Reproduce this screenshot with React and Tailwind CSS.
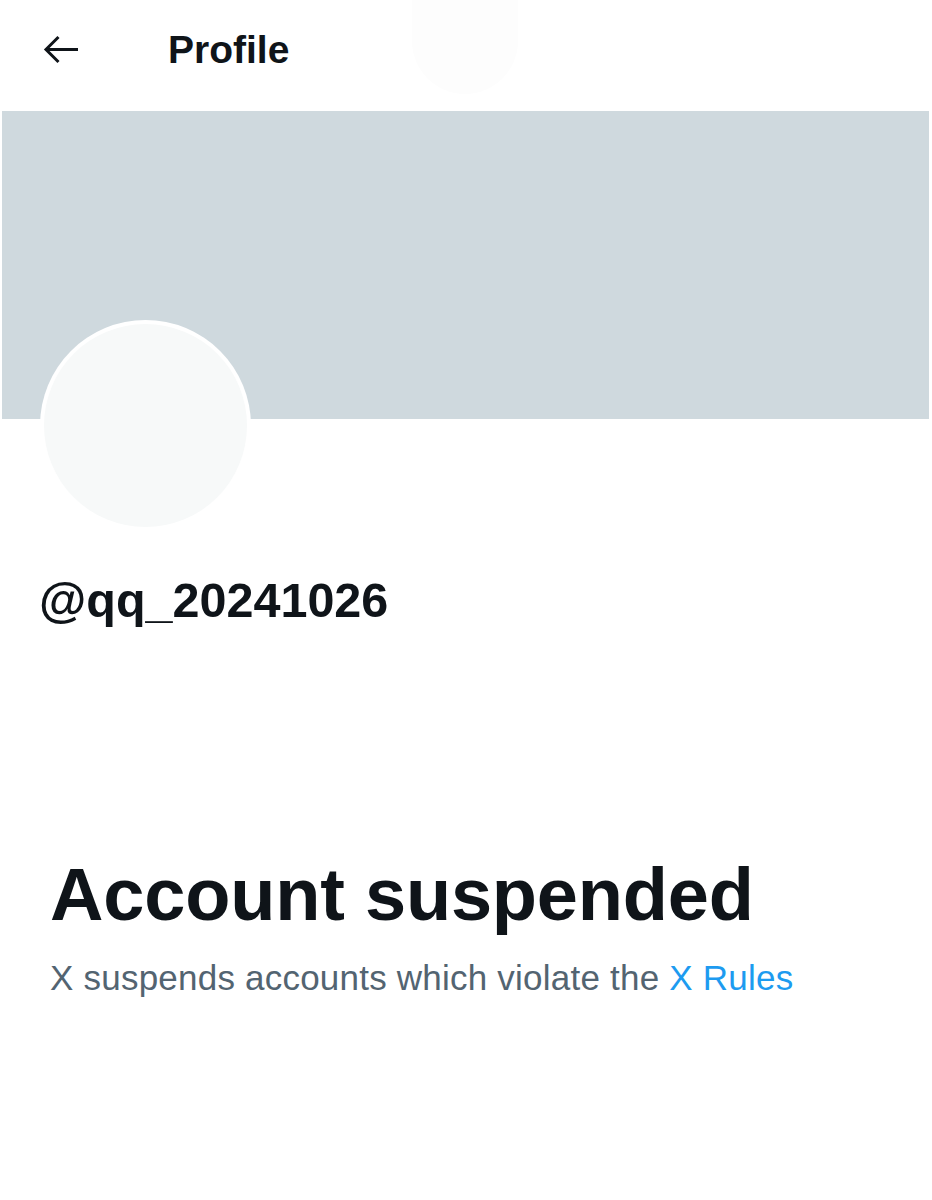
export default function App() {
  return (
    <div className="relative w-[932px] h-[1200px] bg-white overflow-hidden" style={{ fontFamily: '"Liberation Sans", Arial, sans-serif' }}>
      <div className="absolute left-[412px] top-[-60px] w-[106px] h-[154px] rounded-b-full bg-[#fdfdfd]" />
      <header className="relative h-[111px] flex items-start">
        <div className="w-[168px] pl-[43px] pt-[35px]">
          <svg width="36" height="30" viewBox="0 0 36 30" fill="none" stroke="#0F1419" strokeWidth="3" strokeLinecap="butt" strokeLinejoin="miter" className="block">
            <path d="M35 14.5H4" />
            <path d="M15.5 2L3 14.5L15.5 27" />
          </svg>
        </div>
        <h1 className="pt-[30px] text-[39px] leading-none font-bold text-[#0F1419]">Profile</h1>
      </header>
      <div className="ml-[2px] mr-[3px] h-[308px] bg-[#CFD9DE]" />
      <div className="ml-[40px] -mt-[99px] w-[211px] h-[211px] rounded-full bg-white p-[4px]">
        <div className="w-full h-full rounded-full bg-[#F7F9F9]" />
      </div>
      <div className="pl-[39px] mt-[45px] text-[48.5px] leading-none font-bold text-[#0F1419]">@qq_20241026</div>
      <div className="pl-[50px] mt-[233px]">
        <h2 className="text-[74px] leading-none font-bold text-[#0F1419] tracking-[-0.2px]">Account suspended</h2>
        <p className="mt-[28px] text-[35px] leading-none tracking-[0.22px] text-[#536471]">
          X suspends accounts which violate the <span className="text-[#1D9BF0]">X Rules</span>
        </p>
      </div>
    </div>
  );
}
